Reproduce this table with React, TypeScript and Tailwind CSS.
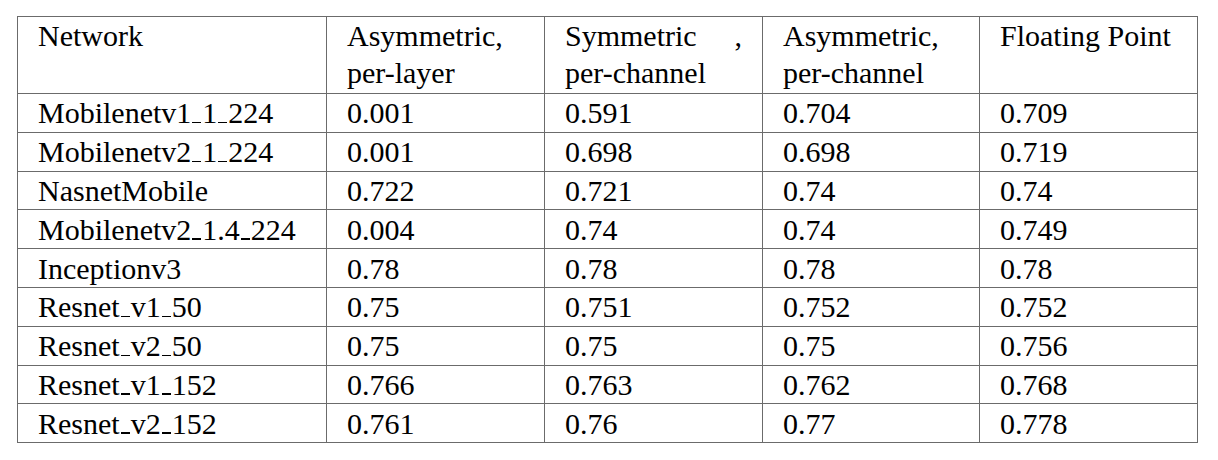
const rows: string[][] = [
  ["Mobilenetv1_1_224", "0.001", "0.591", "0.704", "0.709"],
  ["Mobilenetv2_1_224", "0.001", "0.698", "0.698", "0.719"],
  ["NasnetMobile", "0.722", "0.721", "0.74", "0.74"],
  ["Mobilenetv2_1.4_224", "0.004", "0.74", "0.74", "0.749"],
  ["Inceptionv3", "0.78", "0.78", "0.78", "0.78"],
  ["Resnet_v1_50", "0.75", "0.751", "0.752", "0.752"],
  ["Resnet_v2_50", "0.75", "0.75", "0.75", "0.756"],
  ["Resnet_v1_152", "0.766", "0.763", "0.762", "0.768"],
  ["Resnet_v2_152", "0.761", "0.76", "0.77", "0.778"],
];

// LaTeX-style \_ : short low rule sitting on the baseline
function Name({ text }: { text: string }) {
  const parts = text.split("_");
  return (
    <>
      {parts.map((p, i) => (
        <span key={i}>
          {i > 0 && <span className="inline-block w-[9px] h-[1.5px] bg-black align-baseline mx-px" />}
          {p}
        </span>
      ))}
    </>
  );
}

const cell = "border border-[#6b6b6b] pl-5 pr-5 align-middle font-['Times_New_Roman',serif]";

export default function App() {
  return (
    <div className="w-[1218px] h-[460px] bg-white pl-[17px] pt-[16px] font-['Times_New_Roman',serif] text-black text-[30px] leading-[37px]">
      <table className="table-fixed border-collapse w-[1180px]">
        <colgroup>
          <col className="w-[309px]" />
          <col className="w-[218px]" />
          <col className="w-[218px]" />
          <col className="w-[217px]" />
          <col className="w-[218px]" />
        </colgroup>
        <thead>
          <tr className="h-[77px]">
            <th className={`${cell} align-top text-left font-normal`}>Network</th>
            <th className={`${cell} align-top text-left font-normal`}>
              Asymmetric,
              <br />
              per-layer
            </th>
            <th className={`${cell} align-top text-left font-normal`}>
              <div className="flex justify-between">
                <span>Symmetric</span>
                <span>,</span>
              </div>
              per-channel
            </th>
            <th className={`${cell} align-top text-left font-normal`}>
              Asymmetric,
              <br />
              per-channel
            </th>
            <th className={`${cell} align-top text-left font-normal`}>Floating Point</th>
          </tr>
        </thead>
        <tbody>
          {rows.map((r) => (
            <tr key={r[0]} className="h-[38.8px]">
              <td className={cell}>
                <Name text={r[0]} />
              </td>
              {r.slice(1).map((v, j) => (
                <td key={j} className={cell}>
                  {v}
                </td>
              ))}
            </tr>
          ))}
        </tbody>
      </table>
    </div>
  );
}
